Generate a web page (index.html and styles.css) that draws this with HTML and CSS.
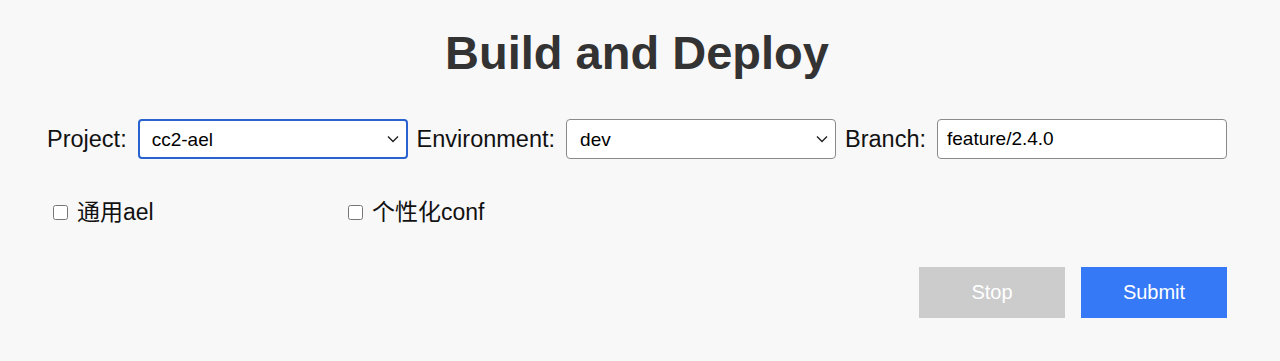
FILE: index.html
```html
<!DOCTYPE html>
<html lang="zh">
<head>
    <meta charset="UTF-8">
    <meta name="viewport" content="width=device-width, initial-scale=1">
    <title>Build and Deploy</title>
    <link rel="stylesheet" href="styles.css">
</head>
<body>
    <div class="container">
        <h1 class="title">Build and Deploy</h1>

        <div class="fields">
            <div class="field-group">
                <label class="field-label" for="project">Project:</label>
                <select id="project" class="field field-project">
                    <option>cc2-ael</option>
                </select>
            </div>
            <div class="field-group">
                <label class="field-label" for="env">Environment:</label>
                <select id="env" class="field field-env">
                    <option>dev</option>
                </select>
            </div>
            <div class="field-group">
                <label class="field-label" for="branch">Branch:</label>
                <input id="branch" class="field field-branch" type="text" value="feature/2.4.0">
            </div>
        </div>

        <div class="options">
            <label class="option"><input type="checkbox">通用ael</label>
            <label class="option"><input type="checkbox">个性化conf</label>
        </div>

        <div class="actions">
            <button class="btn btn-stop" disabled>Stop</button>
            <button class="btn btn-submit">Submit</button>
        </div>
    </div>
</body>
</html>
```

FILE: styles.css
```css
body {
    margin: 0;
    background-color: #f8f8f8;
    font-family: "Liberation Sans", Arial, "Noto Sans CJK SC", sans-serif;
    color: #111;
}
.container {
    width: 1180px;
    margin-left: 47px;
    padding-top: 25px;
}
.title {
    margin: 0;
    text-align: center;
    font-size: 47px;
    font-weight: bold;
    color: #333;
}
.fields {
    display: flex;
    align-items: center;
    justify-content: space-between;
    margin-top: 39px;
}
.field-group {
    display: flex;
    align-items: center;
    gap: 11px;
}
.field-label {
    font-size: 23.5px;
}
.field {
    box-sizing: border-box;
    height: 40px;
    padding: 0 13px;
    font-family: "Liberation Sans", Arial, sans-serif;
    font-size: 19px;
    color: #000;
    background-color: #fff;
    border: 1px solid #8a8a8a;
    border-radius: 4px;
}
select.field {
    width: 270px;
    appearance: none;
    background-image: url("data:image/svg+xml;utf8,<svg xmlns='http://www.w3.org/2000/svg' width='12' height='8' viewBox='0 0 12 8'><path d='M1 1.5 L6 6.5 L11 1.5' fill='none' stroke='%23222' stroke-width='1.4'/></svg>");
    background-repeat: no-repeat;
    background-position: right 7px center;
}
.field-project {
    border: 2px solid #2a62d0;
    padding-left: 12px;
}
.field-branch {
    width: 290px;
    padding-left: 9px;
}
.options {
    display: flex;
    margin-top: 41px;
    font-family: "Liberation Sans", Arial, "Noto Sans CJK SC", sans-serif;
    font-size: 23px;
    line-height: 24px;
}
.option {
    width: 25%;
    display: flex;
    align-items: center;
}
.option input {
    width: 15px;
    height: 15px;
    margin: 0 9px 0 6px;
}
.actions {
    display: flex;
    justify-content: flex-end;
    gap: 16px;
    margin-top: 43px;
}
.btn {
    width: 146px;
    height: 51px;
    border: none;
    color: #fff;
    font-family: "Liberation Sans", Arial, sans-serif;
    font-size: 20px;
}
.btn-stop {
    background-color: #cccccc;
}
.btn-submit {
    background-color: #3579f6;
    cursor: pointer;
}
```
